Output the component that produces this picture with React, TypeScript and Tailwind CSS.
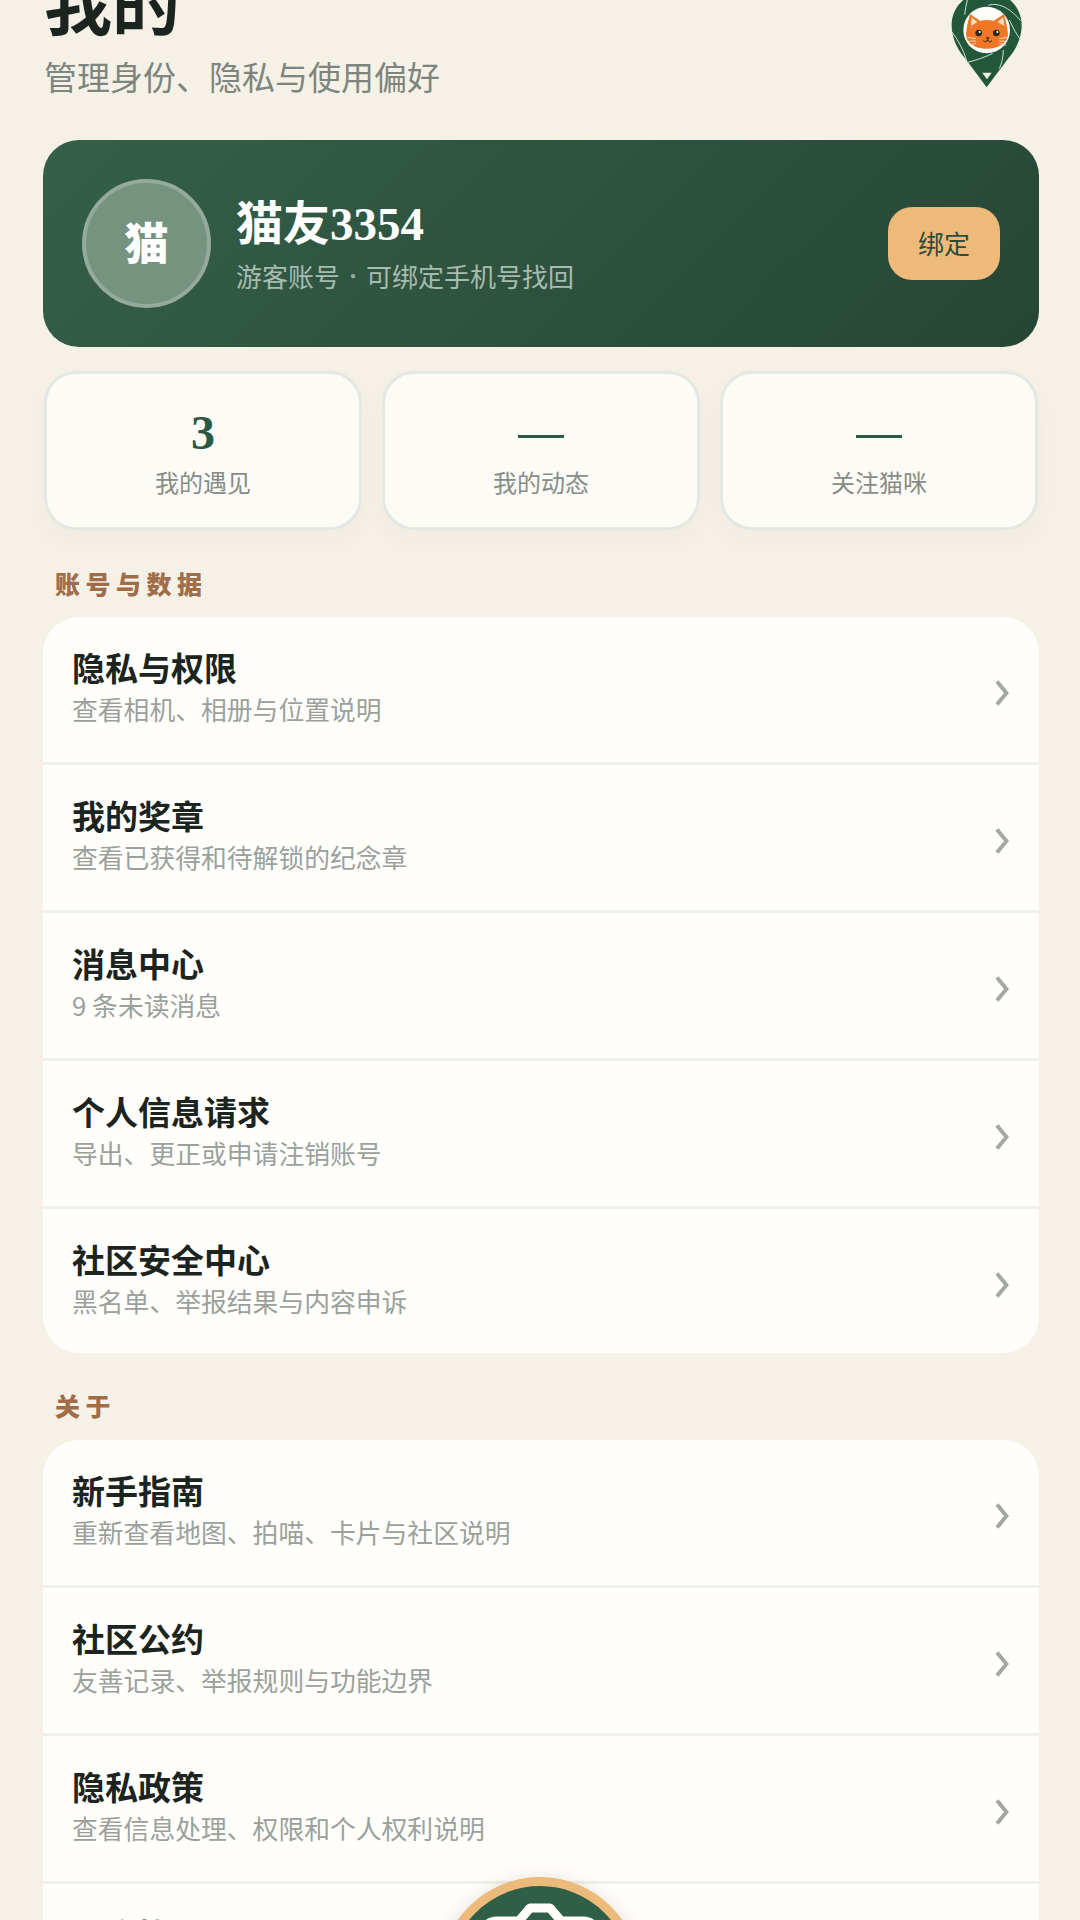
import React from "react";

const sans = "font-['Noto_Sans_CJK_SC','Noto_Sans',sans-serif]";

function Logo() {
  return (
    <div className="h-[88px] w-[120px] shrink-0">
      <svg width="120" height="100" viewBox="0 0 360 300" className="block">
        <path d="M200 262 L135 175 C105 140 95 105 95 75 C95 20 140 -25 200 -25 C260 -25 305 20 305 75 C305 105 295 140 265 175 Z" fill="#23573c" />
        <circle cx="200" cy="90" r="70" fill="#fffefa" />
        <g stroke="#cfe0d2" strokeWidth="3" fill="none">
          <path d="M95 95 C115 120 130 150 140 182" />
          <path d="M140 188 C170 180 195 172 218 160" />
          <path d="M250 150 C250 170 245 190 238 206" />
          <path d="M205 16 C240 5 275 30 302 62" />
          <path d="M142 0 C138 15 136 28 134 44" />
          <path d="M268 60 C280 85 290 105 303 120" />
        </g>
        <path d="M150 42 L180 62 Q200 58 222 62 L252 42 Q262 80 264 102 C264 130 235 146 200 146 C165 146 138 130 138 102 Q140 75 150 42 Z" fill="#ef7726" />
        <path d="M155 52 L172 66 L153 78 Z M250 52 L232 66 L253 78 Z" fill="#fbdcc6" />
        <circle cx="176" cy="99" r="10" fill="#2a2a1e" />
        <circle cx="229" cy="99" r="10" fill="#2a2a1e" />
        <circle cx="179" cy="96" r="3" fill="#fff" />
        <circle cx="232" cy="96" r="3" fill="#fff" />
        <path d="M197 112 L209 112 L203 119 Z" fill="#2a2a1e" />
        <path d="M190 122 Q198 130 203 119 Q208 130 216 122" stroke="#2a2a1e" strokeWidth="3" fill="none" />
        <path d="M143 112 L168 116 M143 124 L168 123 M146 136 L168 130 M262 112 L238 116 M262 124 L238 123 M259 136 L238 130" stroke="#fbe3d0" strokeWidth="2.5" />
        <path d="M187 218 L215 218 L201 238 Z" fill="#eef3e8" />
      </svg>
    </div>
  );
}

function Chevron() {
  return (
    <svg width="14" height="26" viewBox="0 0 14 26" className="mt-[7px] block shrink-0">
      <path d="M2 1.5 L11.5 13 L2 24.5" fill="none" stroke="#a3a8a4" strokeWidth="4" />
    </svg>
  );
}

function Row({ title, sub, last }: { title: string; sub: string; last?: boolean }) {
  return (
    <div className={`flex items-center justify-between pl-[29px] pr-[30px] ${last ? "h-[144px]" : "h-[148px] border-b-[3px] border-[#eff1ec]"}`}>
      <div className="flex flex-col pb-[7px]">
        <div className="text-[33px] leading-[44px] font-bold text-[#1b241f]">{title}</div>
        <div className="mt-[2px] text-[25.8px] leading-[36px] text-[#9aa19c]">{sub}</div>
      </div>
      <Chevron />
    </div>
  );
}

function Stat({ value, label, dash }: { value: string; label: string; dash?: boolean }) {
  return (
    <div className="flex h-[159px] flex-1 flex-col items-center rounded-[32px] border-[3px] border-[#e4e8e2] bg-[#fdfbf6] shadow-[0_10px_24px_rgba(80,70,40,0.03)]">
      <div className="mt-[34px] flex h-[50px] items-center justify-center font-['Liberation_Serif',serif] text-[48px] font-bold leading-[50px] text-[#2a5a43]">
        {dash ? <div className="mt-[6px] h-[3px] w-[46px] bg-[#2a5a43]" /> : value}
      </div>
      <div className="mt-[8px] text-[24px] leading-[32px] text-[#868d87]">{label}</div>
    </div>
  );
}

export default function App() {
  return (
    <div className={`relative h-[1920px] w-[1080px] overflow-hidden bg-[#f5f1e7] ${sans}`}>
      <div className="flex items-start justify-between pl-[44px] pr-[40px]">
        <div>
          <div className="mt-[-35px] text-[68px] font-bold leading-[72px] text-[#1b241f]">我的</div>
          <div className="mt-[17px] text-[33px] leading-[44px] text-[#7d857f]">管理身份、隐私与使用偏好</div>
        </div>
        <Logo />
      </div>

      <div className="ml-[43px] mr-[41px] mt-[42px] flex h-[207px] items-center rounded-[36px] bg-[linear-gradient(135deg,#355f49,#264635)] pl-[39px] pr-[39px]">
        <div className="flex h-[129px] w-[129px] shrink-0 items-center justify-center rounded-full border-[4px] border-[#93aa9c] bg-[#76937f] pb-[6px] text-[44px] font-black text-white">猫</div>
        <div className="ml-[25px] flex-1">
          <div className="mt-[3px] font-['Liberation_Serif','Noto_Sans_CJK_SC',serif] text-[47px] font-bold leading-[56px] text-white">猫友3354</div>
          <div className="mt-[6px] flex text-[26px] leading-[36px] text-[#a8bbaf]">
            <span>游客账号</span>
            <span className="w-[26px] text-center text-[20px] text-[#93a99b]">·</span>
            <span>可绑定手机号找回</span>
          </div>
        </div>
        <div className="flex h-[73px] w-[112px] items-center justify-center rounded-[24px] bg-[#edba7a] pb-[2px] text-[26px] text-[#2f4a38]">绑定</div>
      </div>

      <div className="ml-[44px] mr-[42px] mt-[24px] flex gap-[20px]">
        <Stat value="3" label="我的遇见" />
        <Stat value="—" label="我的动态" dash />
        <Stat value="—" label="关注猫咪" dash />
      </div>

      <div className="ml-[55px] mt-[37px] text-[25px] font-black leading-[32px] tracking-[5.5px] text-[#a06d48]">账号与数据</div>
      <div className="ml-[43px] mr-[41px] mt-[18px] overflow-hidden rounded-[36px] bg-[#fffefa]">
        <Row title="隐私与权限" sub="查看相机、相册与位置说明" />
        <Row title="我的奖章" sub="查看已获得和待解锁的纪念章" />
        <Row title="消息中心" sub="9 条未读消息" />
        <Row title="个人信息请求" sub="导出、更正或申请注销账号" />
        <Row title="社区安全中心" sub="黑名单、举报结果与内容申诉" last />
      </div>

      <div className="ml-[55px] mt-[36px] text-[25px] font-black leading-[32px] tracking-[5.5px] text-[#a06d48]">关于</div>
      <div className="ml-[43px] mr-[41px] mt-[19px] overflow-hidden rounded-[36px] bg-[#fffefa]">
        <Row title="新手指南" sub="重新查看地图、拍喵、卡片与社区说明" />
        <Row title="社区公约" sub="友善记录、举报规则与功能边界" />
        <Row title="隐私政策" sub="查看信息处理、权限和个人权利说明" />
        <Row title="用户协议" sub="了解服务条款与使用规则" last />
      </div>

      <div className="absolute left-[440px] top-[1877px] h-[200px] w-[200px] rounded-full border-[9px] border-[#ecba7a] bg-[#2f5f47] shadow-[0_4px_20px_rgba(40,40,20,0.18)]">
        <svg width="182" height="100" viewBox="0 0 182 100" className="block">
          <path d="M36 70 L36 47 Q36 35 48 35 L70 35 L81 22 L101 22 L112 35 L134 35 Q146 35 146 47 L146 70" fill="none" stroke="#fffefa" strokeWidth="9" strokeLinejoin="round" />
        </svg>
      </div>
    </div>
  );
}
